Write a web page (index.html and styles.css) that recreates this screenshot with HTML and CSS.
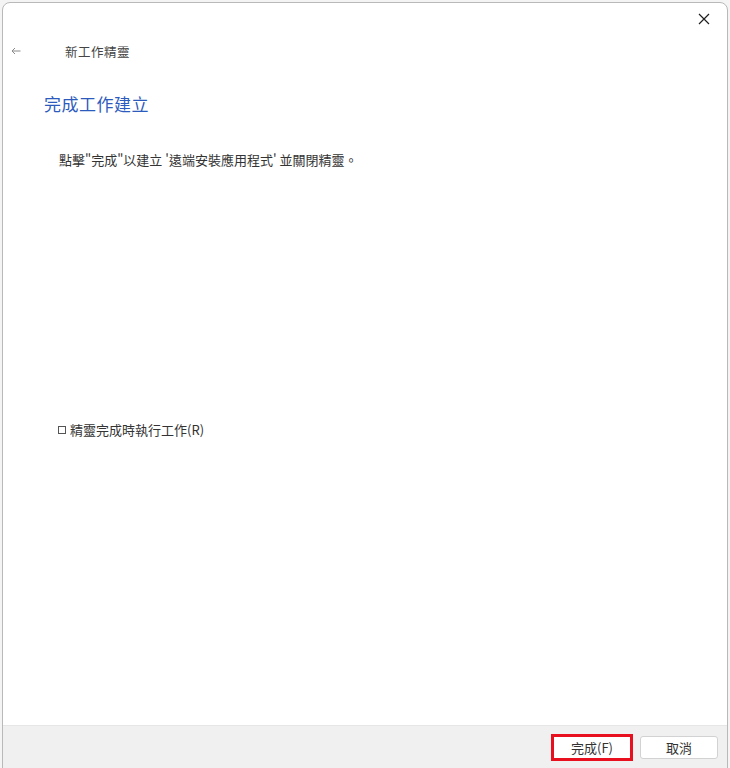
FILE: index.html
```html
<!DOCTYPE html>
<html lang="zh-Hant">
<head>
    <meta charset="UTF-8">
    <meta name="viewport" content="width=device-width, initial-scale=1.0">
    <title>新工作精靈</title>
    <link rel="stylesheet" href="styles.css">
</head>
<body>
    <div class="window">
        <!-- Title bar -->
        <div class="title-bar">
            <button class="close-btn" aria-label="關閉">
                <svg width="12" height="12" viewBox="0 0 12 12">
                    <path d="M1 1 L11 11 M11 1 L1 11" stroke="#1f1f1f" stroke-width="1.2" fill="none"/>
                </svg>
            </button>
        </div>

        <!-- Wizard header -->
        <div class="wizard-head">
            <span class="back-arrow">
                <svg width="10" height="8" viewBox="0 0 10 8">
                    <path d="M9.5 4 H1 M4 1 L1 4 L4 7" stroke="#8a8a8a" stroke-width="1" fill="none"/>
                </svg>
            </span>
            <span class="wizard-title">新工作精靈</span>
        </div>

        <main class="content">
            <h1 class="page-title">完成工作建立</h1>
            <p class="message">點擊"完成"以建立 '遠端安裝應用程式' 並關閉精靈。</p>

            <label class="run-option">
                <span class="check-box"></span>
                精靈完成時執行工作(R)
            </label>
        </main>

        <!-- Buttons -->
        <div class="footer">
            <button class="btn btn-finish">完成(F)</button>
            <button class="btn btn-cancel">取消</button>
        </div>
    </div>
</body>
</html>
```

FILE: styles.css
```css
/* General Reset */
* {
    margin: 0;
    padding: 0;
    box-sizing: border-box;
}

body {
    font-family: 'Noto Sans CJK TC', 'Noto Sans', sans-serif;
    background-color: #f4f4f4;
    color: #333;
    height: 768px;
    overflow: hidden;
    padding: 2px 2px 0 2px;
}

/* Dialog window */
.window {
    width: 726px;
    height: 774px;
    background-color: #fff;
    border: 1px solid #b9b9b9;
    border-radius: 8px;
    display: flex;
    flex-direction: column;
    overflow: hidden;
}

.title-bar {
    height: 30px;
    display: flex;
    justify-content: flex-end;
}

.close-btn {
    width: 32px;
    height: 32px;
    margin-right: 7px;
    border: none;
    background: none;
    display: flex;
    align-items: center;
    justify-content: center;
}

/* Wizard header */
.wizard-head {
    height: 36px;
    display: flex;
    align-items: center;
}

.back-arrow {
    width: 62px;
    padding-left: 8px;
    display: flex;
    align-items: center;
}

.wizard-title {
    font-size: 12.5px;
    color: #444;
    letter-spacing: 0.5px;
}

/* Content */
.content {
    flex-grow: 1;
    padding-left: 41px;
}

.page-title {
    font-size: 17px;
    font-weight: 400;
    color: #2d5bbd;
    letter-spacing: 0.5px;
    margin-top: 23px;
    line-height: 24px;
}

.message {
    font-size: 13px;
    color: #333;
    margin-top: 35px;
    margin-left: 15px;
    line-height: 18px;
}

.run-option {
    display: flex;
    align-items: center;
    font-size: 13px;
    color: #333;
    margin-top: 252px;
    margin-left: 14px;
    line-height: 18px;
}

.check-box {
    width: 8px;
    height: 8px;
    border: 1px solid #555;
    margin-right: 4px;
}

/* Footer */
.footer {
    height: 50px;
    background-color: #f0f0f0;
    border-top: 1px solid #e6e6e6;
    display: flex;
    align-items: flex-start;
    justify-content: flex-end;
    padding: 8px 9px 0 0;
    gap: 7px;
}

.btn {
    font-family: 'Noto Sans CJK TC', 'Noto Sans', sans-serif;
    font-size: 13px;
    color: #333;
    background-color: #fff;
    border: 1px solid #d2d2d2;
    border-radius: 3px;
}

.btn-finish {
    width: 82px;
    height: 27px;
    border: 3px solid #e8101e;
    border-radius: 0;
}

.btn-cancel {
    width: 78px;
    height: 23px;
    margin-top: 2px;
}
```
